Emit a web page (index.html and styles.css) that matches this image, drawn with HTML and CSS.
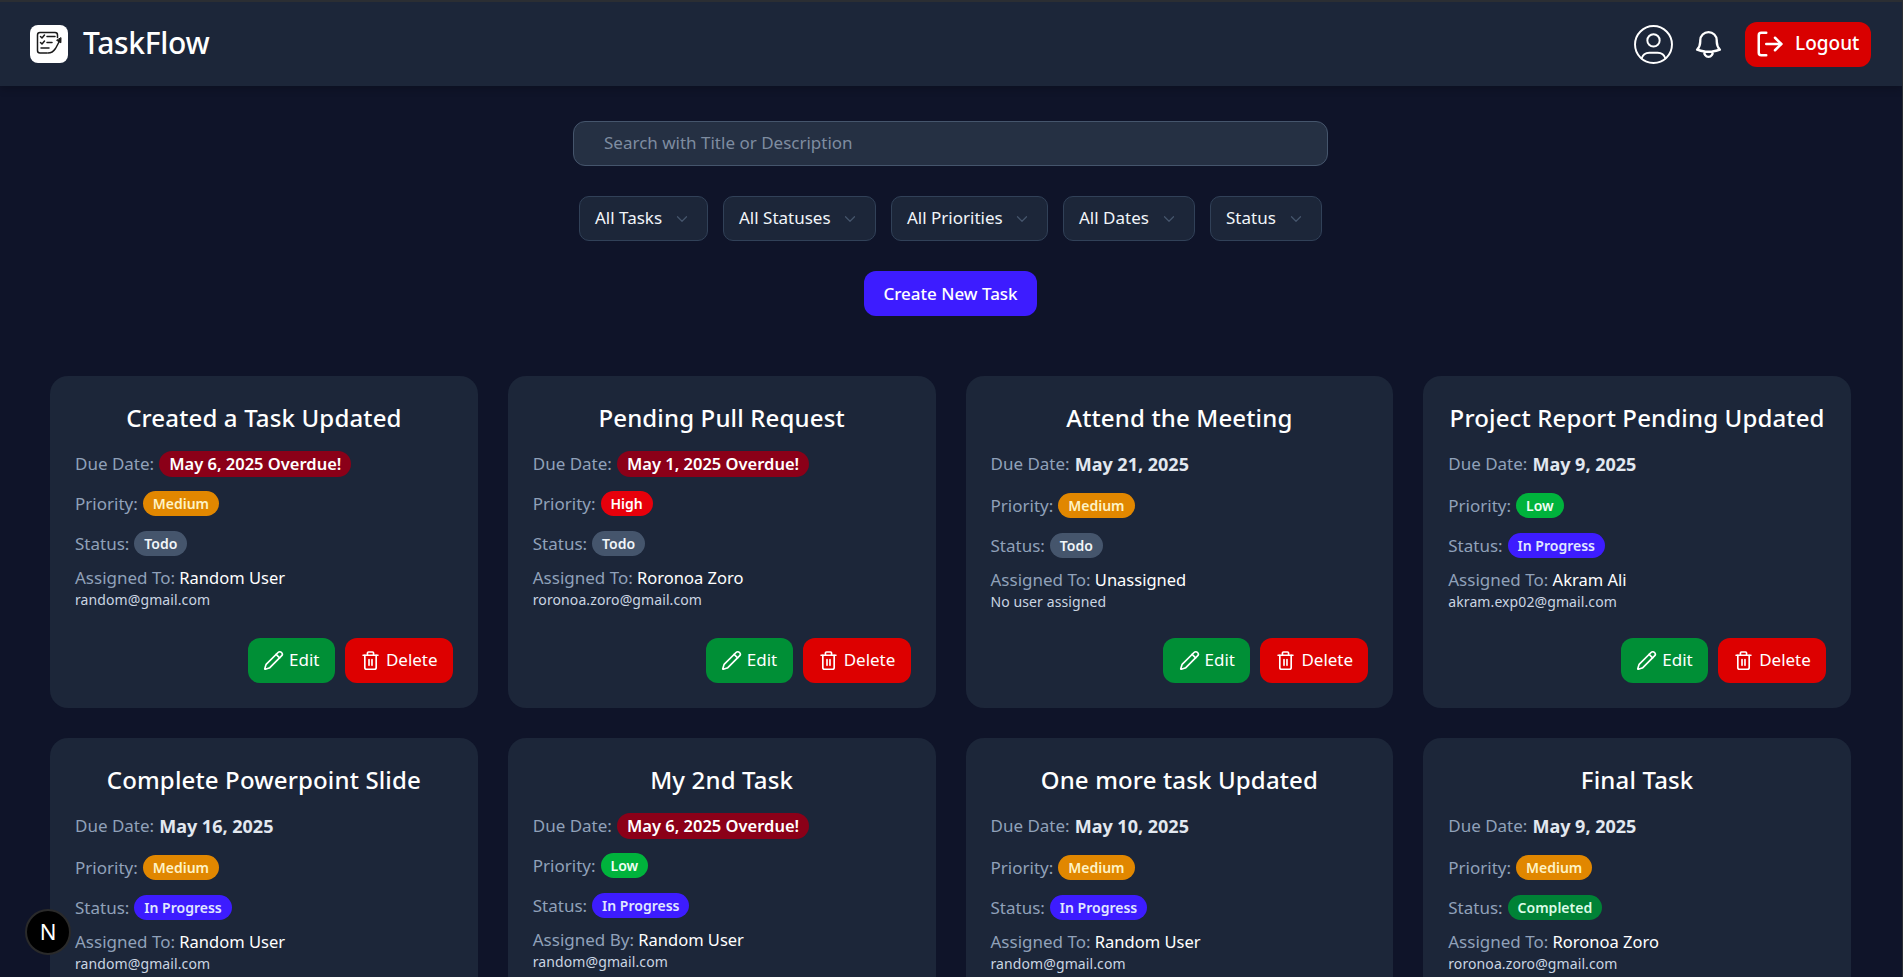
FILE: index.html
```html
<!DOCTYPE html>
<html lang="en">
<head>
  <meta charset="UTF-8">
  <title>TaskFlow</title>
  <link rel="stylesheet" href="styles.css">
</head>
<body>

  <svg class="icon-defs" width="0" height="0">
    <symbol id="pencil" viewBox="0 0 24 24">
      <path d="M21.174 6.812a1 1 0 0 0-3.986-3.987L3.842 16.174a2 2 0 0 0-.5.83l-1.321 4.352a.5.5 0 0 0 .623.622l4.353-1.32a2 2 0 0 0 .83-.497z"/>
      <path d="m15 5 4 4"/>
    </symbol>
    <symbol id="trash" viewBox="0 0 24 24">
      <path d="M3.500 6h17"/>
      <path d="M18.500 6v14a2 2 0 0 1-2 2h-9a2 2 0 0 1-2-2V6"/>
      <path d="M8.500 6V3.500c0-.6.5-1.200 1.200-1.200h4.600c.7 0 1.200.6 1.200 1.200V6"/>
      <path d="M10.300 11v6.500"/>
      <path d="M13.700 11v6.500"/>
    </symbol>
    <symbol id="chevron" viewBox="0 0 24 24">
      <path d="m6 9 6 6 6-6"/>
    </symbol>
  </svg>

  <nav class="navbar">
    <div class="brand">
      <span class="brand-logo">
        <svg viewBox="0 0 38 38" width="38" height="38" fill="none" stroke="#1a1a1a" stroke-width="1.500" stroke-linecap="round" stroke-linejoin="round">
          <path d="M27.500 12.500V10a2.500 2.500 0 0 0-2.500-2.500H10A2.500 2.500 0 0 0 7.500 10v15.500A2.500 2.500 0 0 0 10 28h7"/>
          <path d="M10.500 11.500l1.500 1.500 2.500-3"/>
          <path d="M17 11.500h8"/>
          <path d="M10.500 17.500l1.500 1.500 2.500-3"/>
          <path d="M17 17.500h5"/>
          <path d="M11 23h8"/>
          <path d="M18 28c3 0 5.500-1.500 7.500-4.500l3.500-6.500"/>
          <path d="M31 13l-.1 4.800-4-2.300z" fill="#1a1a1a" stroke-width="1"/>
        </svg>
      </span>
      <span class="brand-name">TaskFlow</span>
    </div>
    <div class="nav-actions">
      <svg class="nav-user" viewBox="2.500 2.500 19 19" width="39" height="39" fill="none" stroke="#fff" stroke-width="0.950" stroke-linecap="round" stroke-linejoin="round">
        <path d="M3 12a9 9 0 1 0 18 0a9 9 0 0 0 -18 0"/>
        <path d="M9 10a3 3 0 1 0 6 0a3 3 0 0 0 -6 0"/>
        <path d="M6.168 18.849a4 4 0 0 1 3.832 -2.849h4a4 4 0 0 1 3.834 2.855"/>
      </svg>
      <svg class="nav-bell" viewBox="0 0 24 24" width="33" height="33" fill="none" stroke="#fff" stroke-width="1.700" stroke-linecap="round" stroke-linejoin="round">
        <path d="M14.857 17.082a23.848 23.848 0 0 0 5.454-1.31A8.967 8.967 0 0 1 18 9.75V9A6 6 0 0 0 6 9v.75a8.967 8.967 0 0 1-2.312 6.022c1.733.64 3.56 1.085 5.455 1.31m5.714 0a24.255 24.255 0 0 1-5.714 0m5.714 0a3 3 0 1 1-5.714 0"/>
      </svg>
      <button class="logout-btn">
        <svg viewBox="0 0 24 24" width="30" height="30" fill="none" stroke="#fff" stroke-width="2" stroke-linecap="round" stroke-linejoin="round">
          <path d="M9 21H5a2 2 0 0 1-2-2V5a2 2 0 0 1 2-2h4"/>
          <path d="m16 17 5-5-5-5"/>
          <path d="M21 12H9"/>
        </svg>
        <span class="txt">Logout</span>
      </button>
    </div>
  </nav>

  <main class="content">
    <div class="search-box"><span class="txt">Search with Title or Description</span></div>

    <div class="filters">
      <div class="filter f1"><span class="txt">All Tasks</span> <svg><use href="#chevron"/></svg></div>
      <div class="filter f2"><span class="txt">All Statuses</span> <svg><use href="#chevron"/></svg></div>
      <div class="filter f3"><span class="txt">All Priorities</span> <svg><use href="#chevron"/></svg></div>
      <div class="filter f4"><span class="txt">All Dates</span> <svg><use href="#chevron"/></svg></div>
      <div class="filter f5"><span class="txt">Status</span> <svg><use href="#chevron"/></svg></div>
    </div>

    <button class="create-btn"><span class="txt">Create New Task</span></button>

    <section class="task-grid">

      <article class="card">
        <h2>Created a Task Updated</h2>
        <div class="row due late"><span class="lbl">Due Date:</span><span class="badge overdue">May 6, 2025 Overdue!</span></div>
        <div class="row"><span class="lbl">Priority:</span><span class="badge medium">Medium</span></div>
        <div class="row"><span class="lbl">Status:</span><span class="badge todo">Todo</span></div>
        <p class="assigned"><span class="lbl">Assigned To:</span> Random User</p>
        <p class="email">random@gmail.com</p>
        <div class="actions">
          <button class="edit-btn"><svg><use href="#pencil"/></svg><span class="txt">Edit</span></button>
          <button class="delete-btn"><svg><use href="#trash"/></svg><span class="txt">Delete</span></button>
        </div>
      </article>

      <article class="card">
        <h2>Pending Pull Request</h2>
        <div class="row due late"><span class="lbl">Due Date:</span><span class="badge overdue">May 1, 2025 Overdue!</span></div>
        <div class="row"><span class="lbl">Priority:</span><span class="badge high">High</span></div>
        <div class="row"><span class="lbl">Status:</span><span class="badge todo">Todo</span></div>
        <p class="assigned"><span class="lbl">Assigned To:</span> Roronoa Zoro</p>
        <p class="email">roronoa.zoro@gmail.com</p>
        <div class="actions">
          <button class="edit-btn"><svg><use href="#pencil"/></svg><span class="txt">Edit</span></button>
          <button class="delete-btn"><svg><use href="#trash"/></svg><span class="txt">Delete</span></button>
        </div>
      </article>

      <article class="card">
        <h2>Attend the Meeting</h2>
        <div class="row due"><span class="lbl">Due Date:</span><strong>May 21, 2025</strong></div>
        <div class="row"><span class="lbl">Priority:</span><span class="badge medium">Medium</span></div>
        <div class="row"><span class="lbl">Status:</span><span class="badge todo">Todo</span></div>
        <p class="assigned"><span class="lbl">Assigned To:</span> Unassigned</p>
        <p class="email">No user assigned</p>
        <div class="actions">
          <button class="edit-btn"><svg><use href="#pencil"/></svg><span class="txt">Edit</span></button>
          <button class="delete-btn"><svg><use href="#trash"/></svg><span class="txt">Delete</span></button>
        </div>
      </article>

      <article class="card">
        <h2>Project Report Pending Updated</h2>
        <div class="row due"><span class="lbl">Due Date:</span><strong>May 9, 2025</strong></div>
        <div class="row"><span class="lbl">Priority:</span><span class="badge low">Low</span></div>
        <div class="row"><span class="lbl">Status:</span><span class="badge progress">In Progress</span></div>
        <p class="assigned"><span class="lbl">Assigned To:</span> Akram Ali</p>
        <p class="email">akram.exp02@gmail.com</p>
        <div class="actions">
          <button class="edit-btn"><svg><use href="#pencil"/></svg><span class="txt">Edit</span></button>
          <button class="delete-btn"><svg><use href="#trash"/></svg><span class="txt">Delete</span></button>
        </div>
      </article>

      <article class="card">
        <h2>Complete Powerpoint Slide</h2>
        <div class="row due"><span class="lbl">Due Date:</span><strong>May 16, 2025</strong></div>
        <div class="row"><span class="lbl">Priority:</span><span class="badge medium">Medium</span></div>
        <div class="row"><span class="lbl">Status:</span><span class="badge progress">In Progress</span></div>
        <p class="assigned"><span class="lbl">Assigned To:</span> Random User</p>
        <p class="email">random@gmail.com</p>
      </article>

      <article class="card">
        <h2>My 2nd Task</h2>
        <div class="row due late"><span class="lbl">Due Date:</span><span class="badge overdue">May 6, 2025 Overdue!</span></div>
        <div class="row"><span class="lbl">Priority:</span><span class="badge low">Low</span></div>
        <div class="row"><span class="lbl">Status:</span><span class="badge progress">In Progress</span></div>
        <p class="assigned"><span class="lbl">Assigned By:</span> Random User</p>
        <p class="email">random@gmail.com</p>
      </article>

      <article class="card">
        <h2>One more task Updated</h2>
        <div class="row due"><span class="lbl">Due Date:</span><strong>May 10, 2025</strong></div>
        <div class="row"><span class="lbl">Priority:</span><span class="badge medium">Medium</span></div>
        <div class="row"><span class="lbl">Status:</span><span class="badge progress">In Progress</span></div>
        <p class="assigned"><span class="lbl">Assigned To:</span> Random User</p>
        <p class="email">random@gmail.com</p>
      </article>

      <article class="card">
        <h2>Final Task</h2>
        <div class="row due"><span class="lbl">Due Date:</span><strong>May 9, 2025</strong></div>
        <div class="row"><span class="lbl">Priority:</span><span class="badge medium">Medium</span></div>
        <div class="row"><span class="lbl">Status:</span><span class="badge completed">Completed</span></div>
        <p class="assigned"><span class="lbl">Assigned To:</span> Roronoa Zoro</p>
        <p class="email">roronoa.zoro@gmail.com</p>
      </article>

    </section>
  </main>

  <div class="next-badge">N</div>

</body>
</html>
```

FILE: styles.css
```css
* {
  box-sizing: border-box;
}
html, body {
  height: 100vh;
  overflow: hidden;
}
body {
  margin: 0;
  background: #0f1429;
  color: #fff;
  font-family: "Noto Sans", sans-serif;
  font-size: 16px;
  border-right: 1px solid #2b2e33;
}
button {
  font-family: inherit;
  border: 0;
  color: #fff;
  cursor: pointer;
}
.icon-defs {
  position: absolute;
}
/* nudges text up a bit inside its box */
.txt {
  padding-bottom: 2px;
}

/* top bar */
.navbar {
  height: 86px;
  padding: 0 31px 0 30px;
  display: flex;
  align-items: center;
  justify-content: space-between;
  background: #1c2639;
  border-top: 2px solid #2b2e33;
  box-shadow: 0 3px 8px rgba(0, 0, 0, 0.2);
}
.brand {
  display: flex;
  align-items: center;
  gap: 15px;
}
.brand-logo {
  width: 38px;
  height: 38px;
  background: #fff;
  border-radius: 8px;
  display: block;
}
.brand-logo svg {
  display: block;
}
.brand-name {
  padding-bottom: 4px;
  font-size: 30px;
  font-weight: 500;
  letter-spacing: -0.3px;
}
.nav-actions {
  display: flex;
  align-items: center;
}
.nav-bell {
  margin-left: 19px;
}
.logout-btn {
  margin-left: 20px;
  width: 126px;
  height: 45px;
  padding: 0 0 0 10px;
  display: flex;
  align-items: center;
  gap: 10px;
  background: #d90000;
  border-radius: 12px;
  font-size: 19px;
  font-weight: 500;
}

/* search and filters */
.content {
  padding: 35px 51px 0 50px;
  display: flex;
  flex-direction: column;
  align-items: center;
}
.search-box {
  width: 755px;
  height: 45px;
  padding: 0 30px;
  display: flex;
  align-items: center;
  background: #253043;
  border: 1px solid #45556c;
  border-radius: 12px;
  color: #7e8ca0;
  font-size: 17px;
}
.filters {
  margin-top: 30px;
  display: flex;
  gap: 15px;
}
.filter {
  height: 45px;
  padding: 0 16px 0 15px;
  display: flex;
  align-items: center;
  justify-content: space-between;
  background: #1c2639;
  border: 1px solid #314158;
  border-radius: 10px;
  font-size: 17px;
  color: #f1f5f9;
}
.filter svg {
  width: 18px;
  height: 18px;
  fill: none;
  stroke: #45556c;
  stroke-width: 1.600;
  stroke-linecap: round;
  stroke-linejoin: round;
}
.f1 { width: 129px; }
.f2 { width: 153px; }
.f3 { width: 157px; }
.f4 { width: 132px; }
.f5 { width: 112px; }
.create-btn {
  margin-top: 30px;
  width: 173px;
  height: 45px;
  background: #3d1cff;
  border-radius: 12px;
  font-size: 17px;
  font-weight: 500;
}

/* cards */
.task-grid {
  width: 100%;
  margin-top: 60px;
  display: grid;
  grid-template-columns: repeat(4, 1fr);
  gap: 30px;
}
.card {
  padding: 25px;
  height: 332px;
  display: flex;
  flex-direction: column;
  background: #1c2639;
  border-radius: 18px;
}
.card h2 {
  margin: 0 0 17px;
  font-size: 24px;
  line-height: 33px;
  font-weight: 500;
  text-align: center;
  white-space: nowrap;
  letter-spacing: 0.15px;
}
.row {
  height: 25px;
  margin-bottom: 15px;
  display: flex;
  align-items: center;
  gap: 5px;
}
.row.due {
  height: 28px;
  margin-bottom: 14px;
  padding-bottom: 2px;
}
.row.due.late {
  height: 26px;
  padding-bottom: 0;
}
.lbl {
  color: #90a1b9;
  font-size: 17px;
  padding-bottom: 1px;
}
.due strong {
  font-size: 18px;
  font-weight: 700;
  color: #e2e8f0;
}
.badge {
  height: 25px;
  padding: 0 10px 1px;
  display: flex;
  align-items: center;
  border-radius: 999px;
  font-size: 14px;
  font-weight: 600;
}
.overdue {
  height: 26px;
  font-size: 16.500px;
  background: #8b0018;
}
.medium {
  background: #e18700;
  color: #fef3c6;
}
.high {
  background: #e7000b;
}
.low {
  background: #00b33c;
  color: #f0fdf4;
}
.todo {
  background: #45556c;
  color: #f1f5f9;
}
.progress {
  background: #3d1cff;
  color: #e0e7ff;
}
.completed {
  background: #008236;
  color: #dcfce7;
}
.assigned {
  margin: -5px 0 0;
  line-height: 24px;
  font-size: 16.500px;
}
.email {
  margin: 0;
  font-size: 14px;
  line-height: 20px;
  letter-spacing: 0.1px;
  color: #cad5e2;
}
.actions {
  margin-top: auto;
  display: flex;
  justify-content: flex-end;
  gap: 10px;
}
.actions button {
  height: 45px;
  display: flex;
  align-items: center;
  justify-content: center;
  gap: 5px;
  padding: 0;
  border-radius: 12px;
  font-size: 17px;
}
.actions svg {
  width: 21px;
  height: 21px;
  fill: none;
  stroke: #fff;
  stroke-width: 1.900;
  stroke-linecap: round;
  stroke-linejoin: round;
}
.edit-btn {
  width: 87px;
  background: #008f36;
}
.delete-btn {
  width: 108px;
  background: #dd0000;
}

/* dev indicator */
.next-badge {
  position: absolute;
  left: 25px;
  top: 909px;
  width: 46px;
  height: 46px;
  padding-bottom: 2px;
  display: flex;
  align-items: center;
  justify-content: center;
  background: #000;
  border: 2px solid #2a2a2a;
  border-radius: 50%;
  font-size: 22px;
}
```
